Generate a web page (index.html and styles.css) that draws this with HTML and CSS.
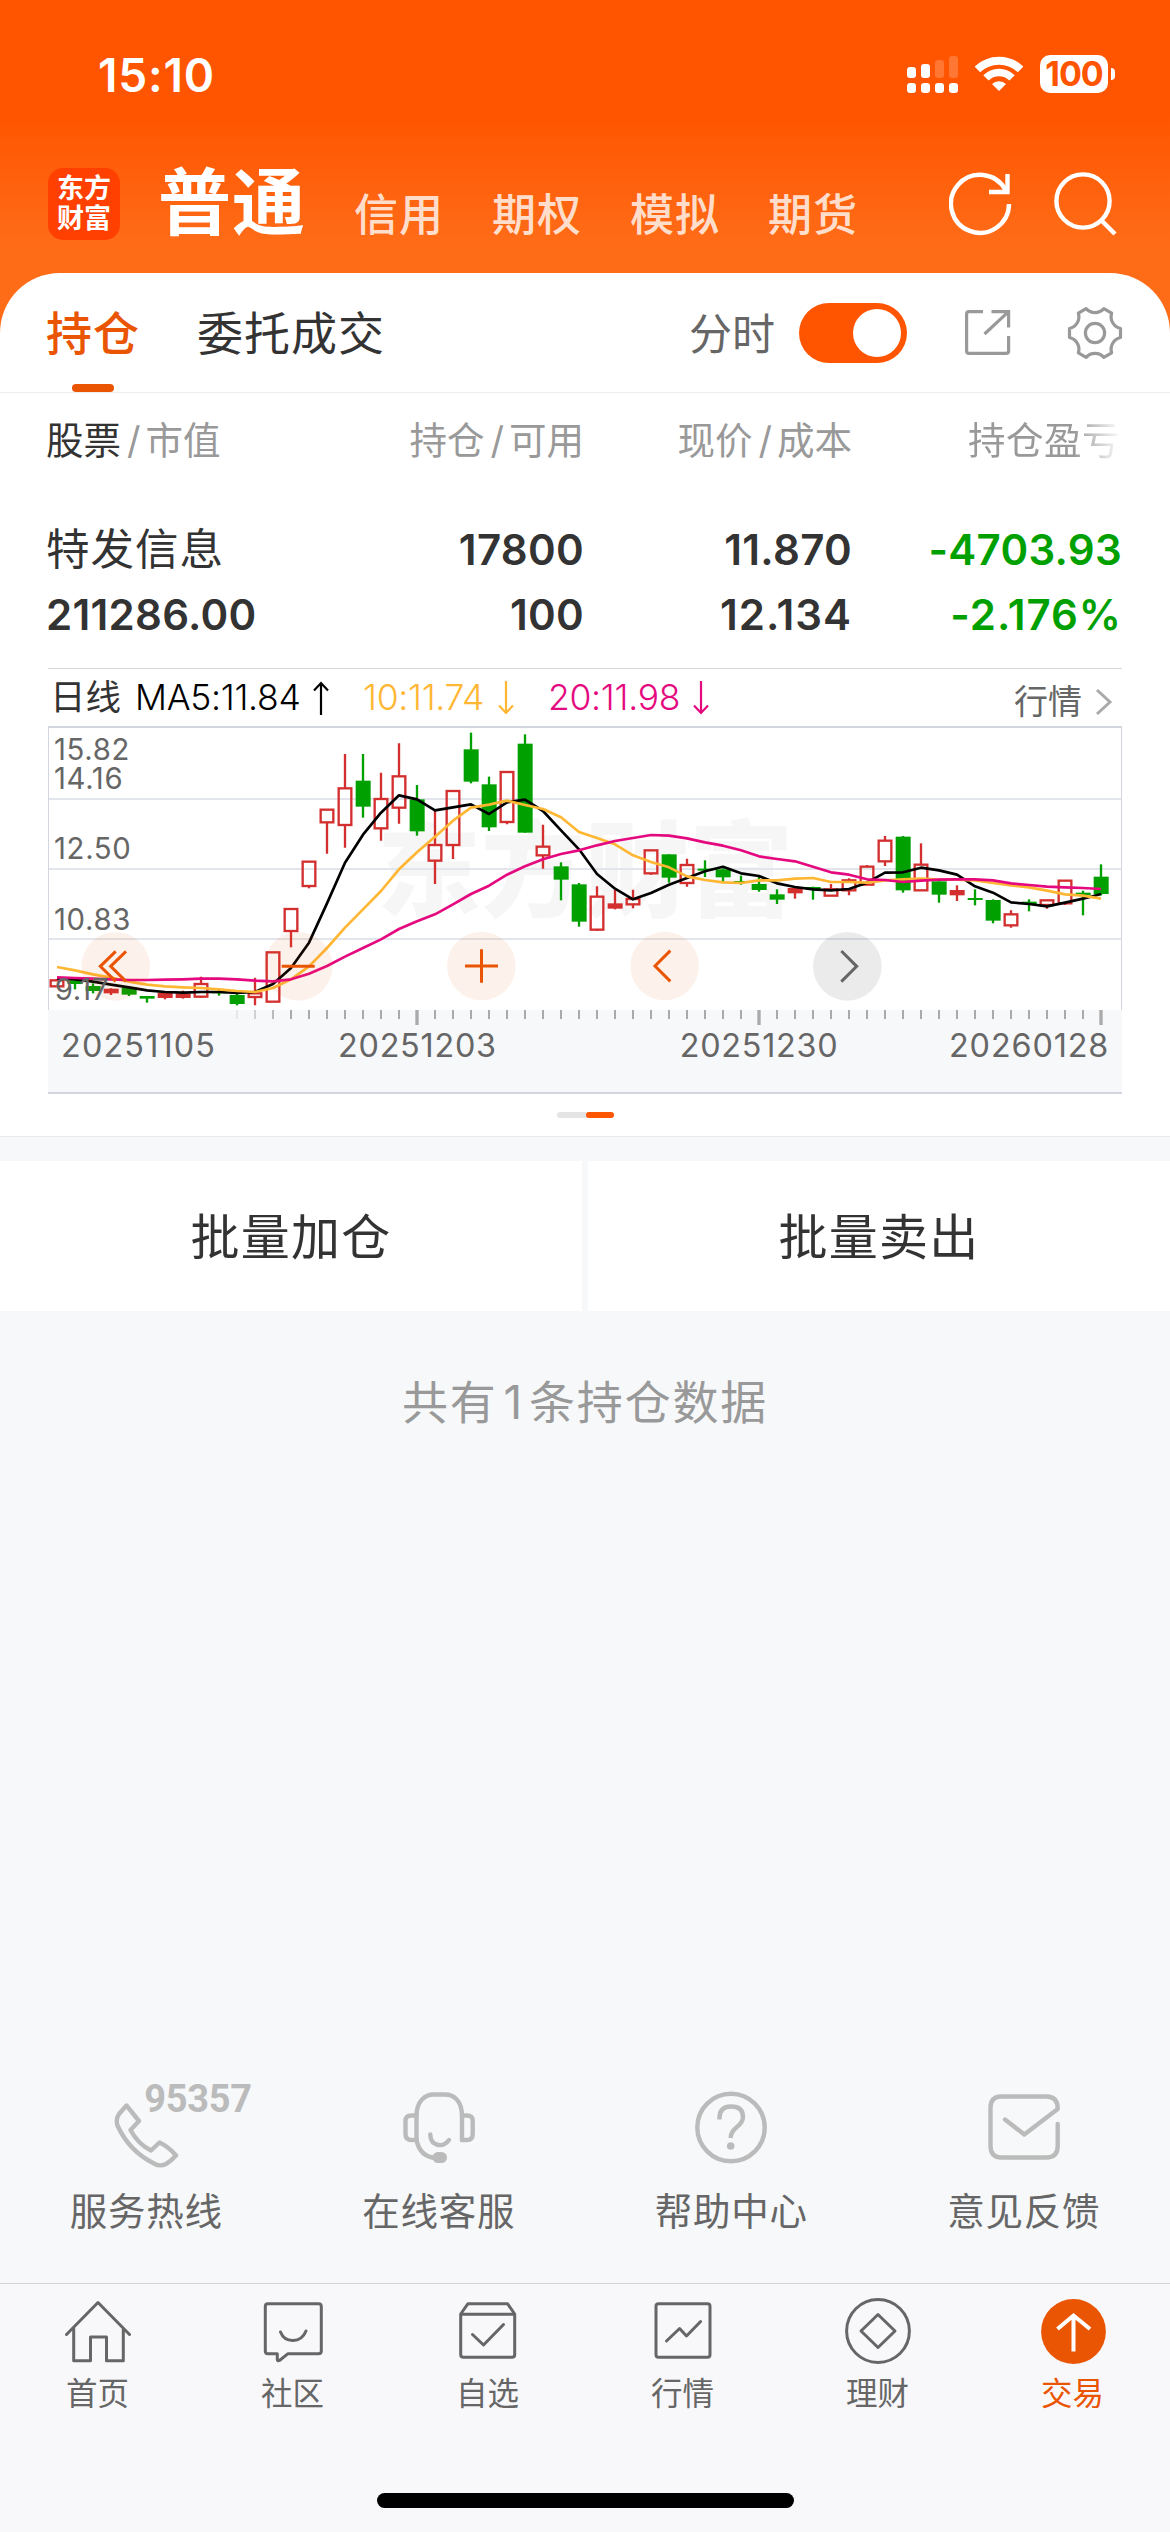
FILE: index.html
```html
<!DOCTYPE html>
<html lang="zh-CN">
<head>
<meta charset="utf-8">
<title>交易 - 持仓</title>
<link rel="stylesheet" href="styles.css">
</head>
<body>
<div class="app">
  <div class="status">
    <span class="clock">15:10</span>
    <div class="status-icons">
      <svg class="signal" width="52" height="40" viewBox="0 0 52 40" fill="#fff">
        <rect x="0" y="13" width="9" height="11" rx="3"/><rect x="14" y="10" width="9" height="14" rx="3"/>
        <rect x="28" y="6" width="9" height="18" rx="3" opacity=".2"/><rect x="42" y="2" width="9" height="22" rx="3" opacity=".2"/>
        <rect x="0" y="29" width="9" height="10" rx="3"/><rect x="14" y="29" width="9" height="10" rx="3"/><rect x="28" y="29" width="9" height="10" rx="3"/><rect x="42" y="29" width="9" height="10" rx="3"/>
      </svg>
      <svg class="wifi" width="48" height="38" viewBox="0 0 48 38" fill="none" stroke="#fff" stroke-width="8">
        <path d="M2.4 14.4A31 31 0 0 1 45.6 14.4"/><path d="M10.9 22.9A18.5 18.5 0 0 1 37.1 22.9" stroke-width="7.5"/>
        <path d="M24 36L17 29A10 10 0 0 1 31 29Z" fill="#fff" stroke="none"/>
      </svg>
      <div class="battery"><span class="battery-body">100</span><span class="battery-nub"></span></div>
    </div>
  </div>

  <div class="nav">
    <div class="logo"><span>东方</span><span>财富</span></div>
    <span class="nav-main">普通</span>
    <div class="nav-tabs"><span>信用</span><span>期权</span><span>模拟</span><span>期货</span></div>
    <svg class="refresh" width="64" height="64" viewBox="0 0 64 64" fill="none" stroke="#fff" stroke-width="4.4"><path d="M60 32A29 29 0 1 1 56.5 18"/><path d="M58.5 2V20H40"/></svg>
    <svg class="search" width="64" height="64" viewBox="0 0 64 64" fill="none" stroke="#fff" stroke-width="4.4"><circle cx="29" cy="29" r="26.6"/><path d="M47.5 48.5L61 62"/></svg>
  </div>

  <div class="card">
    <div class="tabs">
      <span class="tab tab-on">持仓</span>
      <span class="tab">委托成交</span>
      <span class="toggle-label">分时</span>
      <span class="toggle"><i></i></span>
      <svg class="export" width="48" height="48" viewBox="0 0 48 48" fill="none" stroke="#999" stroke-width="3.2"><path d="M19 2.6H5Q2.6 2.6 2.6 5V42Q2.6 44.4 5 44.4H42Q44.6 44.4 44.6 42V27"/><path d="M27.5 2.6H44.6V18.5M44 3.2L20.5 25"/></svg>
      <svg class="gear" width="56" height="56" viewBox="-28 -28 56 56" fill="none" stroke="#999" stroke-width="3.2" stroke-linejoin="round"><path d="M25.5 4.5A12 12 0 0 0 16.65 19.8L8.85 24.3A12 12 0 0 0 -8.85 24.3L-16.65 19.8A12 12 0 0 0 -25.5 4.5V-4.5A12 12 0 0 0 -16.65 -19.8L-8.85 -24.3A12 12 0 0 0 8.85 -24.3L16.65 -19.8A12 12 0 0 0 25.5 -4.5Z"/><circle r="9.6"/></svg>
    </div>

    <div class="grid head">
      <span><b>股票</b><em>/</em>市值</span>
      <span>持仓<em>/</em>可用</span>
      <span>现价<em>/</em>成本</span>
      <span class="clipped">持仓盈亏</span>
    </div>
    <div class="grid row">
      <span class="name">特发信息</span><span>17800</span><span>11.870</span><span class="down">-4703.93</span>
      <span>211286.00</span><span>100</span><span class="wide">12.134</span><span class="down wide">-2.176%</span>
    </div>

    <div class="panel">
      <div class="legend">
        <span class="period">日线</span>
        <span class="ma5">MA5:11.84</span>
        <svg class="arr" width="16" height="34" viewBox="0 0 16 34" fill="none" stroke="#000" stroke-width="2.2"><path d="M8 34V2M1 9.5L8 2L15 9.5"/></svg>
        <span class="ma10">10:11.74</span>
        <svg class="arr" width="16" height="34" viewBox="0 0 16 34" fill="none" stroke="#ffb733" stroke-width="2.2"><path d="M8 0V32M1 24.5L8 32L15 24.5"/></svg>
        <span class="ma20">20:11.98</span>
        <svg class="arr" width="16" height="34" viewBox="0 0 16 34" fill="none" stroke="#e5097f" stroke-width="2.2"><path d="M8 0V32M1 24.5L8 32L15 24.5"/></svg>
        <span class="more">行情</span>
        <svg class="chev" width="18" height="28" viewBox="0 0 18 28" fill="none" stroke="#aaa" stroke-width="3"><path d="M2 2L15 14L2 26"/></svg>
      </div>
      <svg class="chart" width="1074" height="368" viewBox="54 48 3222 1104">
        <text class="watermark" x="1040" y="597" textLength="1250">东方财富</text>
        <rect x="54" y="900" width="3222" height="247" fill="#f7f8fa"/>
        <path d="M54 267H3276M54 477H3276M54 687H3276" stroke="#e2e5ec" stroke-width="6"/>
        <path d="M55.5 51V900M3274.5 51V900" stroke="#d3d6de" stroke-width="3"/>
        <path d="M54 51H3276M54 1149H3276" stroke="#d3d6de" stroke-width="6"/>
        <g id="ticks" fill="#aaa"></g>
        <g id="candles"></g>
        <g id="averages" fill="none" stroke-width="8" stroke-linejoin="round"></g>
        <g class="btn"><circle cx="257" cy="769" r="103"/><circle cx="805" cy="769" r="103"/><circle cx="1354" cy="768" r="103"/><circle cx="1904" cy="768" r="103"/><circle class="off" cx="2452" cy="769" r="103"/></g>
        <g class="glyph"><path d="M257 724L211 769L257 814M288 724L242 769L288 814M755 769H854M1305 768H1404M1354.500 718V818M1921 722L1875 768L1921 814"/><path class="off" d="M2434 723L2480 769L2434 815"/></g>
        <g class="price"><text x="72" y="150">15.82</text><text x="72" y="237">14.16</text><text x="72" y="446">12.50</text><text x="72" y="660">10.83</text><text x="74" y="870">9.17</text></g>
        <g class="date"><text x="93" y="1041" textLength="462">20251105</text><text x="924" y="1041" textLength="474">20251203</text><text x="1949" y="1041" textLength="474">20251230</text><text x="2757" y="1041" textLength="478">20260128</text></g>
      </svg>
      <div class="pager"><i></i></div>
    </div>
  </div>

  <div class="actions"><span>批量加仓</span><span>批量卖出</span></div>
  <div class="summary">共有<b>1</b>条持仓数据</div>

  <div class="services">
    <div class="service">
      <div class="icon-box phone">
        <svg width="66" height="66" viewBox="0 0 66 66" fill="none" stroke="#bbb" stroke-width="4.4" stroke-linejoin="round"><path d="M12.500 2.500L25 18L16.500 27Q24 41 37 47.500L45.500 39.500Q55 44 62 52.500Q57 58 52 61Q46 64 40 60.500Q15 48 3.500 22.500Q1.500 16 5 11Z"/></svg>
        <span class="hotline">95357</span>
      </div>
      <span>服务热线</span>
    </div>
    <div class="service">
      <div class="icon-box"><svg width="72" height="73" viewBox="0 0 72 73" fill="none" stroke="#bbb" stroke-width="4.400" stroke-linecap="round"><path d="M13.500 49V25C13.500 10 22 3.500 31 3.500H42C51 3.500 59 10 59 25V49"/><path d="M13.500 24.500H8.500Q2.500 24.500 2.500 30V43Q2.500 49 8.500 49H13.500Q17 66 33 67M59 24.500H64Q69.700 24.500 69.700 30V43Q69.700 49 64 49H59M27.300 43.500C27.500 55 39.500 57.500 46 49"/><rect x="29.500" y="61" width="14.500" height="11" rx="5.500" fill="#bbb" stroke="none"/></svg></div>
      <span>在线客服</span>
    </div>
    <div class="service">
      <div class="icon-box"><svg width="72" height="73" viewBox="0 0 72 73" fill="none" stroke="#bbb" stroke-width="4.400"><circle cx="36" cy="36.500" r="33.700"/><path d="M24.500 28.500V27Q24.500 15.500 36.200 15.500Q48 15.500 48 26C48 36 35.700 36 35.700 47"/><circle cx="35.700" cy="55" r="3.800" fill="#bbb" stroke="none"/></svg></div>
      <span>帮助中心</span>
    </div>
    <div class="service">
      <div class="icon-box"><svg width="72" height="73" viewBox="0 -3 72 73" fill="none" stroke="#bbb" stroke-width="4.400" stroke-linecap="round" stroke-linejoin="round"><path d="M69.700 30V52Q69.700 63.500 58.500 63.500H13.500Q2.500 63.500 2.500 52V14Q2.500 2.500 13.500 2.500H58.500Q69.700 2.500 69.700 15L36.300 40.500L17 25.500"/></svg></div>
      <span>意见反馈</span>
    </div>
  </div>

  <div class="tabbar">
    <div class="item"><svg width="66" height="66" viewBox="0 0 66 66"><path d="M1.500 36.500L33 4.500L64.500 36.500M8.700 30V62.700H25.500V39H41.500V62.700H58.300V30"/></svg><span>首页</span></div>
    <div class="item"><svg width="66" height="66" viewBox="0 0 66 66"><path d="M8 5.700H58.500Q61.300 5.700 61.300 8.500V53Q61.300 55.700 58.500 55.700H28L19.500 62.500Q17.500 63.500 17.300 61.500V55.700H8Q5.300 55.700 5.300 53V8.500Q5.300 5.700 8 5.700ZM20.500 34C25 45.500 41 45.500 46 33"/></svg><span>社区</span></div>
    <div class="item"><svg width="66" height="66" viewBox="0 0 66 66"><path d="M5.700 16L13 5.700H52.500L59.700 16V56.500Q59.700 59.300 57 59.300H8.500Q5.700 59.300 5.700 56.500ZM5.700 16.300H59.700M17.500 36.500L28.500 47L48.500 26.500"/></svg><span>自选</span></div>
    <div class="item"><svg width="66" height="66" viewBox="0 0 66 66"><rect x="6" y="5.700" width="54" height="53.600" rx="2.500"/><path d="M16.500 43L29.600 30.500L36.500 38L50.600 23.500"/></svg><span>行情</span></div>
    <div class="item"><svg width="66" height="66" viewBox="0 0 66 66"><circle cx="33" cy="33" r="31.400"/><path d="M33 16.500L50 33L33 49.500L16 33Z"/></svg><span>理财</span></div>
    <div class="item active"><svg width="66" height="66" viewBox="0 0 66 66"><circle class="disc" cx="33.500" cy="33.500" r="32.400"/><path class="up" d="M33.500 53.500V18M17.500 31L33.500 17.500L50 31"/></svg><span>交易</span></div>
  </div>
  <div class="home-bar"></div>
</div>
<script src="chart.js"></script>
</body>
</html>
```
FILE: styles.css
```css
* { box-sizing: border-box; }
body { margin: 0; font-family: "Inter", "Noto Sans CJK SC", sans-serif; color: #333; }
.app { width: 1170px; height: 2532px; display: flex; flex-direction: column; overflow: hidden;
  background: linear-gradient(#ff5500 0, #ff5500 115px, #ff6c18 245px, #ff6c18 345px) top / 100% 345px no-repeat, #f6f8fa; }
svg { display: block; flex: none; }
i, em { font-style: normal; }

.status { height: 148px; display: flex; align-items: center; justify-content: space-between; padding: 0 55px 0 98px; }
.clock { font-size: 46px; font-weight: 600; color: #fff; line-height: 50px; padding-top: 2px; letter-spacing: .8px; }
.status-icons { display: flex; align-items: center; }
.wifi { margin-left: 16px; }
.battery { display: flex; align-items: center; gap: 3px; margin-left: 17px; }
.battery-body { width: 68px; height: 38px; border-radius: 10px; background: #fff; color: #ff5500; font-size: 34px; font-weight: 700; line-height: 38px; text-align: center; letter-spacing: -1px; }
.battery-nub { width: 4px; height: 12px; border-radius: 0 6px 6px 0; background: #fff; }

.nav { height: 125px; padding: 0 52px 13px 48px; display: flex; align-items: center; }
.logo { width: 72px; height: 72px; border-radius: 15px; background: #ff4000; color: #fff; display: flex; flex-direction: column; align-items: center; justify-content: center; font-size: 27px; font-weight: 700; line-height: 30px; }
.nav-main { margin: -3px 0 0 38px; width: 157px; color: #fff; font-size: 73px; font-weight: 700; letter-spacing: 1px; line-height: 80px; }
.nav-tabs { margin-top: 22px; display: flex; gap: 48px; padding-left: 39px; color: rgba(255, 255, 255, .8); font-size: 44px; font-weight: 500; letter-spacing: 1px; line-height: 50px; }
.refresh { margin-left: auto; }
.search { margin-left: 41px; }

.card { background: #fff; border-radius: 60px 60px 0 0; height: 864px; border-bottom: 1px solid #e9ebed; display: flex; flex-direction: column; }
.tabs { height: 120px; border-bottom: 1px solid #eee; display: flex; align-items: center; padding: 0 47px 0 46px; }
.tab { font-size: 46px; letter-spacing: 1px; line-height: 121px; height: 119px; margin-right: 57px; }
.tab-on { color: #ea5504; font-weight: 500; position: relative; }
.tab-on::after { content: ""; position: absolute; left: 26px; bottom: 0; width: 42px; height: 8px; border-radius: 4px; background: #ea5504; }
.toggle-label { margin-left: auto; color: #666; font-size: 43px; line-height: 60px; padding-top: 2px; }
.toggle { width: 108px; height: 60px; border-radius: 30px; background: #ff5500; margin-left: 24px; padding: 6px; display: flex; justify-content: flex-end; }
.toggle i { width: 48px; height: 48px; border-radius: 50%; background: #fff; }
.export { margin-left: 57px; }
.gear { margin-left: 55px; }

.grid { display: grid; grid-template-columns: 254px 284px 268px 270px; padding-left: 46px; text-align: right; }
.grid > :nth-child(4n+1) { text-align: left; }
.head { padding-top: 18px; font-size: 37.500px; line-height: 60px; color: #999; height: 118px; }
.head b { color: #333; font-weight: 400; }
.head em { padding: 0 5px 0 6px; }
.clipped { white-space: nowrap; overflow: hidden; padding-left: 116px; text-align: left; letter-spacing: .5px; -webkit-mask-image: linear-gradient(90deg, #000 82%, transparent 100%); mask-image: linear-gradient(90deg, #000 82%, transparent 100%); }
.row { height: 157px; padding-top: 6px; grid-auto-rows: 65px; font-size: 42px; font-weight: 600; line-height: 65px; align-content: start; letter-spacing: .3px; }
.row .name { font-size: 43.500px; font-weight: 400; letter-spacing: 1px; }
.row .down { color: #00a000; }
.row .wide { letter-spacing: 1px; }

.panel { margin: 0 48px; border-top: 1px solid #d6d8de; }
.legend { height: 57px; display: flex; align-items: center; font-size: 35.500px; line-height: 57px; }
.period { width: 87px; padding-left: 2px; }
.ma5 { color: #000; width: 178px; }
.ma10 { color: #ffb733; margin-left: 34px; width: 135px; }
.ma20 { color: #e5097f; margin-left: 34px; width: 145px; }
.ma5, .ma10, .ma20 { font-weight: 300; letter-spacing: -.3px; white-space: nowrap; }
.more { margin-left: auto; font-size: 34px; color: #666; padding-top: 7px; }
.chev { margin: 8px 9px 0 13px; }
.watermark { font-size: 312px; font-weight: 900; fill: #f6f6f6; }
.price { font-size: 88px; fill: #666; letter-spacing: 2px; }
.date { font-size: 97px; fill: #666; }
.btn { fill: #ea5504; fill-opacity: .08; }
.btn .off { fill: #000; }
.glyph { fill: none; stroke: #ea5504; stroke-width: 9; }
.glyph .off { stroke: #666; }
.pager { width: 57px; height: 6px; border-radius: 3px; margin: 18px auto 0; background: #e4e4e4; display: flex; justify-content: flex-end; }
.pager i { width: 28px; border-radius: 3px; background: #ff5500; }

.actions { margin-top: 24px; display: flex; gap: 6px; height: 150px; }
.actions span { flex: 1; background: #fff; text-align: center; font-size: 49px; letter-spacing: 1.200px; line-height: 154px; }
.summary { margin-top: 61px; text-align: center; font-size: 46px; letter-spacing: 1.800px; line-height: 60px; color: #999; }
.summary b { font-weight: 400; padding: 0 5px 0 6px; }

.services { margin-top: auto; height: 201px; display: flex; }
.service { flex: 1; display: flex; flex-direction: column; align-items: center; font-size: 37.500px; letter-spacing: .7px; line-height: 50px; color: #666; }
.icon-box { height: 82px; margin-bottom: 23px; padding-top: 9px; display: flex; justify-content: center; }
.phone { position: relative; padding: 21px 0 0 2px; }
.hotline { position: absolute; left: 32px; top: 0; font-family: Roboto, sans-serif; font-size: 38px; font-weight: 700; line-height: 34px; letter-spacing: -.3px; color: #bbb; }

.tabbar { height: 210px; flex: none; background: #f8f8fb; border-top: 1px solid #d5d5d8; display: flex; padding-top: 14px; }
.item { flex: 1; display: flex; flex-direction: column; align-items: center; font-size: 31.500px; line-height: 40px; color: #666; gap: 10px; }
.item svg { fill: none; stroke: #666; stroke-width: 3; stroke-linejoin: round; stroke-linecap: round; }
.active { color: #ea5504; }
.item .disc { fill: #ea5504; stroke: none; }
.item .up { stroke: #fff; stroke-width: 4; stroke-linecap: butt; stroke-linejoin: miter; }
.home-bar { flex: none; height: 39px; background: #f8f8fb; }
.home-bar::before { content: ""; display: block; width: 417px; height: 15px; margin: 0 auto; border-radius: 8px; background: #000; }
```
FILE: chart.js
```js
// Daily candles: kind (r hollow, R filled red, g green), high, body top, body bottom, low
const candles = `r 808 811 829 830|g 808 811 822 838|g 820 828 843 850|R 835 836 850 855|g 830 832 854 858|g 858 858 866 878|R 848 848 864 868|R 842 850 864 866|r 800 822 860 864|g 838 844 850 857|g 850 855 882 886|r 803 850 861 886|r 726 727 875 875|r 597 597 663 712|r 455 455 528 535|r 298 299 337 431|r 132 235 345 413|g 132 212 290 323|r 188 267 355 392|r 100 199 293 341|g 225 268 364 377|r 297 405 452 522|r 242 243 405 447|g 68 118 215 220|g 200 223 352 363|r 183 186 336 343|g 73 101 368 368|r 344 410 436 476|g 457 469 509 571|g 519 523 635 650|r 529 560 659 662|R 540 580 596 598|r 539 567 583 595|r 420 421 490 494|g 433 433 503 518|r 446 465 519 530|g 451 476 482 501|g 475 478 502 515|g 497 513 519 524|g 495 522 540 545|g 538 553 569 582|R 530 534 550 566|g 530 531 538 569|r 522 538 557 558|r 505 511 541 556|r 465 470 524 524|r 378 392 454 468|g 378 380 541 548|r 400 464 541 541|g 514 514 554 578|R 526 540 556 573|g 538 564 570 586|g 568 570 632 640|r 601 613 646 653|g 568 575 582 604|r 570 571 585 596|r 511 512 580 585|g 542 548 555 616|g 463 500 552 556`
  .split('|').map(s => s.split(' '));
const averages = {
  '#000': [805,808,815,824,832,841,846,848,846,846,849,846,822,774,698,580,458,374,308,256,268,301,292,283,312,277,269,303,361,418,492,536,568,549,524,504,484,470,490,498,520,531,538,541,537,518,488,487,473,481,494,529,548,577,582,589,578,566,552],
  '#ffb733': [771,781,793,803,815,824,829,832,834,838,843,846,834,808,769,714,653,598,543,478,427,380,332,293,284,272,285,297,322,366,384,403,436,456,472,499,510,517,519,511,511,506,504,516,516,518,511,508,506,509,509,511,519,526,532,542,553,557,566],
  '#e5097f': [802,804,806,808,810,810,809,808,806,806,808,812,814,808,791,768,740,714,688,657,634,613,583,552,527,494,469,448,432,421,406,393,384,375,377,385,397,407,421,439,447,454,470,487,494,508,510,516,512,509,508,508,511,520,525,530,532,534,537]
};
const x = i => 81 + 54 * i;

document.getElementById('candles').innerHTML = candles.map(([kind, hi, top, bot, lo], i) => {
  const color = kind === 'g' ? '#00a000' : '#d32f2f';
  const hollow = kind === 'r';
  const body = hollow
    ? `<rect x="${x(i) - 19}" y="${top}" width="38" height="${bot - top}" fill="none" stroke="${color}" stroke-width="7"/>`
    : `<rect x="${x(i) - 22}" y="${top}" width="45" height="${bot - top}" fill="${color}"/>`;
  const wick = hollow ? `M${x(i)} ${hi}V${top}M${x(i)} ${bot}V${lo}` : `M${x(i)} ${hi}V${lo}`;
  return `${body}<path d="${wick}" stroke="${color}" stroke-width="7"/>`;
}).join('');

document.getElementById('averages').innerHTML = Object.entries(averages).map(([color, ys]) =>
  `<polyline stroke="${color}" points="${ys.map((y, i) => x(i) + ',' + y).join(' ')}"/>`).join('');

let ticks = '';
for (let i = 10; i < 59; i++) {
  const major = [20, 39, 58].includes(i);
  const w = major ? 10 : 6;
  ticks += `<rect x="${x(i) - w / 2}" y="900" width="${w}" height="${major ? 45 : 27}" opacity="${i === 10 ? .2 : i === 11 ? .5 : i === 12 ? .8 : 1}"/>`;
}
document.getElementById('ticks').innerHTML = ticks;
```
